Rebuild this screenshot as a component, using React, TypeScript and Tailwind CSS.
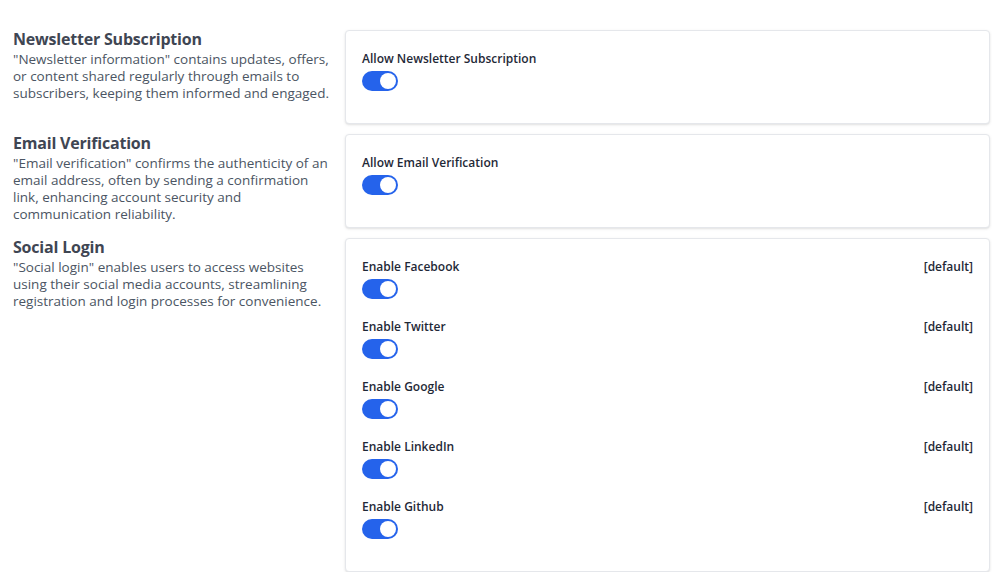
import React from 'react'

type Section = {
  title: string
  text: string
  items: { label: string; tag?: string }[]
}

const sections: Section[] = [
  {
    title: 'Newsletter Subscription',
    text: '"Newsletter information" contains updates, offers, or content shared regularly through emails to subscribers, keeping them informed and engaged.',
    items: [{ label: 'Allow Newsletter Subscription' }],
  },
  {
    title: 'Email Verification',
    text: '"Email verification" confirms the authenticity of an email address, often by sending a confirmation link, enhancing account security and communication reliability.',
    items: [{ label: 'Allow Email Verification' }],
  },
  {
    title: 'Social Login',
    text: '"Social login" enables users to access websites using their social media accounts, streamlining registration and login processes for convenience.',
    items: [
      { label: 'Enable Facebook', tag: '[default]' },
      { label: 'Enable Twitter', tag: '[default]' },
      { label: 'Enable Google', tag: '[default]' },
      { label: 'Enable LinkedIn', tag: '[default]' },
      { label: 'Enable Github', tag: '[default]' },
    ],
  },
]

function Toggle() {
  return (
    <div className="flex h-5 w-9 items-center justify-end rounded-full bg-[#2563eb] p-[2px]">
      <div className="h-4 w-4 rounded-full bg-white" />
    </div>
  )
}

export default function App() {
  return (
    <div className="min-h-[572px] w-[992px] overflow-hidden bg-white font-['Open_Sans',sans-serif]">
      <div className="flex flex-col gap-[10px] pl-[13px] pr-[2px] pt-[30px]">
        {sections.map((s) => (
          <div key={s.title} className="flex gap-[10px]">
            <div className="w-[322px] shrink-0">
              <h2 className="text-[16px] font-bold leading-[18px] tracking-[-0.2px] text-[#3f4653]">{s.title}</h2>
              <p className="mt-[3px] text-[13.5px] leading-[17px] text-[#4b5563]">{s.text}</p>
            </div>
            <div className="flex-1 rounded border border-[#e5e7eb] bg-white px-4 pb-[12px] pt-[20px] shadow-sm">
              {s.items.map((it) => (
                <div key={it.label} className="pb-[20px]">
                  <div className="flex justify-between text-[12px] font-semibold leading-4 text-[#1f2937]">
                    <span>{it.label}</span>
                    {it.tag && <span>{it.tag}</span>}
                  </div>
                  <div className="mt-[4px]">
                    <Toggle />
                  </div>
                </div>
              ))}
            </div>
          </div>
        ))}
      </div>
    </div>
  )
}
